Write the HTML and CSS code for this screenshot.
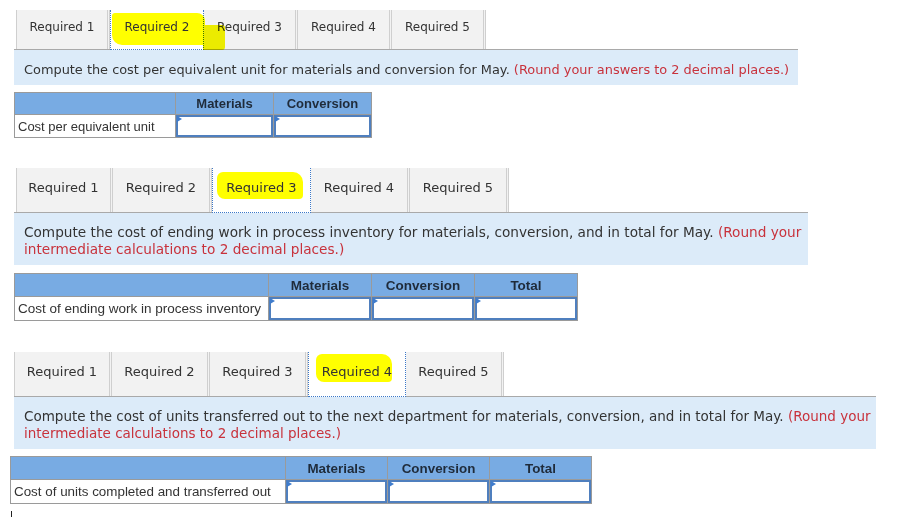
FILE: index.html
```html
<!DOCTYPE html>
<html>
<head>
<meta charset="utf-8">
<link rel="stylesheet" href="styles.css">
</head>
<body>
<section class="sec s1">
  <div class="tabs">
    <div class="tab first">Required 1</div>
    <div class="tab active"><span class="hl hl1a"></span><span class="hl hl1b"></span><span class="lbl">Required 2</span></div>
    <div class="tab">Required 3</div>
    <div class="tab">Required 4</div>
    <div class="tab">Required 5</div>
  </div>
  <div class="info">Compute the cost per equivalent unit for materials and conversion for May. <span class="red">(Round your answers to 2 decimal places.)</span></div>
  <table class="grid">
    <tr class="head"><th class="lab"></th><th>Materials</th><th>Conversion</th></tr>
    <tr><td class="lab">Cost per equivalent unit</td><td class="in"><div class="box"></div></td><td class="in"><div class="box"></div></td></tr>
  </table>
</section>

<section class="sec s2">
  <div class="tabs">
    <div class="tab first">Required 1</div>
    <div class="tab">Required 2</div>
    <div class="tab active"><span class="hl hl2"></span><span class="lbl">Required 3</span></div>
    <div class="tab">Required 4</div>
    <div class="tab">Required 5</div>
  </div>
  <div class="info">Compute the cost of ending work in process inventory for materials, conversion, and in total for May. <span class="red">(Round your<br>intermediate calculations to 2 decimal places.)</span></div>
  <table class="grid">
    <tr class="head"><th class="lab"></th><th>Materials</th><th>Conversion</th><th>Total</th></tr>
    <tr><td class="lab">Cost of ending work in process inventory</td><td class="in"><div class="box"></div></td><td class="in"><div class="box"></div></td><td class="in"><div class="box"></div></td></tr>
  </table>
</section>

<section class="sec s3">
  <div class="tabs">
    <div class="tab first">Required 1</div>
    <div class="tab">Required 2</div>
    <div class="tab">Required 3</div>
    <div class="tab active"><span class="hl hl3"></span><span class="lbl">Required 4</span></div>
    <div class="tab">Required 5</div>
  </div>
  <div class="info">Compute the cost of units transferred out to the next department for materials, conversion, and in total for May. <span class="red">(Round your<br>intermediate calculations to 2 decimal places.)</span></div>
  <table class="grid">
    <tr class="head"><th class="lab"></th><th>Materials</th><th>Conversion</th><th>Total</th></tr>
    <tr><td class="lab">Cost of units completed and transferred out</td><td class="in"><div class="box"></div></td><td class="in"><div class="box"></div></td><td class="in"><div class="box"></div></td></tr>
  </table>
  <div class="caret"></div>
</section>
</body>
</html>
```

FILE: styles.css
```css
html, body {
  margin: 0;
  padding: 0;
  background: #ffffff;
}
body {
  font-family: "DejaVu Sans", Verdana, sans-serif;
  color: #333333;
}
.sec {
  margin-left: 14px;
}
.s1 { padding-top: 10px; }
.s2 { margin-top: 30px; }
.s3 { margin-top: 31px; }

.tabs {
  display: flex;
  align-items: stretch;
}
.tab {
  position: relative;
  box-sizing: border-box;
  display: flex;
  align-items: flex-start;
  justify-content: center;
  background: #f2f2f2;
  border-right: 3px double #cfcfcf;
  color: #333333;
  white-space: nowrap;
}
.tab.first {
  border-left: 1px solid #cfcfcf;
}
.tab.active {
  background: #ffffff;
  border-left: 1px dotted #3c78c8;
  border-right: 1px dotted #3c78c8;
  border-bottom: 1px dotted #3c78c8;
  margin-bottom: -1px;
}
.lbl { position: relative; z-index: 4; }
.hl {
  position: absolute;
  background: #ffff00;
  mix-blend-mode: multiply;
  z-index: 3;
}

/* section 1 */
.s1 .tabs { padding-left: 2px; height: 39px; }
.s1 .tab { width: 94px; font-size: 12px; padding-top: 10px; }
.s1 .info {
  width: 784px;
  height: 36px;
  font-size: 12.9px;
  padding-top: 12px;
}
.s1 .grid { margin-top: 7px; font-size: 13px; }
.s1 .grid th { height: 21px; }
.s1 .grid td { height: 22px; }
.s1 .grid .lab { width: 157px; }
.s1 .grid th:not(.lab), .s1 .grid td.in { width: 97px; }
.hl1a {
  left: 1px; top: 3px; width: 93px; height: 32px;
  border-radius: 3px 8px 2px 10px;
}
.hl1b {
  left: 92px; top: 15px; width: 22px; height: 25px;
  border-radius: 0 3px 3px 0;
  background: #f8f800;
}

/* section 2 */
.s2 .tabs { padding-left: 2px; height: 44px; }
.s2 .tab { width: 99px; font-size: 13px; padding-top: 12px; }
.s2 .tab.first { width: 97px; }
.s2 .info {
  width: 794px;
  height: 53px;
  font-size: 13.65px;
  line-height: 17px;
  padding-top: 11px;
}
.s2 .grid { margin-top: 8px; font-size: 13.5px; }
.s2 .grid th { height: 22px; }
.s2 .grid td { height: 23px; }
.s2 .grid .lab { width: 250px; }
.s2 .grid th:not(.lab), .s2 .grid td.in { width: 102px; }
.s2 .box { height: 23px; }
.hl2 {
  left: 4px; top: 4px; width: 86px; height: 27px;
  border-radius: 6px 10px 4px 8px;
}

/* section 3 */
.s3 .tabs { padding-left: 0; height: 44px; }
.s3 .tab { width: 98px; font-size: 13px; padding-top: 12px; }
.s3 .info {
  width: 862px;
  height: 53px;
  font-size: 13.5px;
  line-height: 17px;
  padding-top: 11px;
}
.s3 .grid { margin-top: 7px; margin-left: -4px; font-size: 13.4px; }
.s3 .grid th { height: 22px; }
.s3 .grid td { height: 23px; }
.s3 .grid .lab { width: 271px; }
.s3 .grid th:not(.lab), .s3 .grid td.in { width: 101px; }
.s3 .box { height: 23px; }
.hl3 {
  left: 7px; top: 2px; width: 76px; height: 28px;
  border-radius: 6px 10px 4px 8px;
}

.info {
  box-sizing: border-box;
  background: #dcebf9;
  border-top: 1px solid #a9a9a9;
  padding-left: 10px;
  color: #333333;
  white-space: nowrap;
}
.red { color: #c8323c; }

.grid {
  border-collapse: collapse;
  font-family: "Liberation Sans", Arial, sans-serif;
  font-size: 12px;
}
.grid th {
  background: #78abe3;
  border: 1px solid #9a9a9a;
  padding: 0;
  font-weight: bold;
  color: #1f2b3a;
  text-align: center;
}
.grid td {
  border: 1px solid #9a9a9a;
  padding: 0;
}
.grid td.lab {
  padding-left: 3px;
  color: #333333;
  white-space: nowrap;
}
.grid td.in {
  position: relative;
}
.box {
  position: relative;
  box-sizing: border-box;
  height: 22px;
  border: 2px solid #4f7fbe;
  background: #ffffff;
}
.box::before {
  content: "";
  position: absolute;
  left: -1px;
  top: -1px;
  border-left: 5px solid #3f7ccc;
  border-top: 3px solid transparent;
  border-bottom: 3px solid transparent;
}
.caret {
  width: 1px;
  height: 6px;
  background: #222222;
  margin-top: 7px;
  margin-left: -3px;
}
```
